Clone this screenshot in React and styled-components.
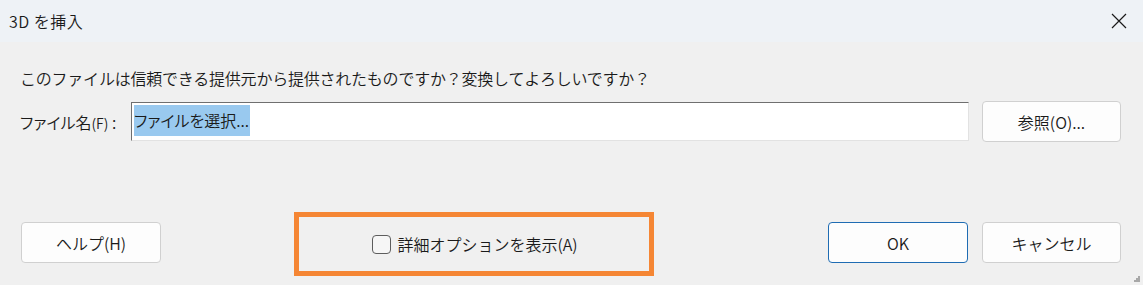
import styled, { createGlobalStyle } from "styled-components"

const GlobalStyle = createGlobalStyle`
    html, body {
        margin: 0;
        padding: 0;
        background: #f0f0f0;
    }
    body {
        font-family: "Noto Sans CJK JP", "Noto Sans", sans-serif;
        font-weight: 350;
        color: #1a1a1a;
    }
`

const Window = styled.div`
    position: relative;
    width: 1143px;
    height: 285px;
    display: flex;
    flex-direction: column;
    background: #f0f0f0;
    overflow: hidden;
`

const TitleBar = styled.div`
    height: 42px;
    flex-shrink: 0;
    display: flex;
    align-items: center;
    justify-content: space-between;
    padding: 0 15px 0 9px;
    background: #eef2f6;
    font-size: 16px;
    letter-spacing: 0.5px;
`

const CloseButton = styled.div`
    width: 18px;
    height: 18px;
    display: flex;
    align-items: center;
    justify-content: center;
`

const Body = styled.div`
    flex: 1;
    display: flex;
    flex-direction: column;
    padding: 0 22px 9px 20px;
`

const Message = styled.div`
    margin-top: 25px;
    font-size: 16px;
    line-height: 22px;
    letter-spacing: -0.22px;
`

const FileRow = styled.div`
    margin-top: 12px;
    display: flex;
    align-items: center;
`

const Label = styled.span`
    width: 111px;
    flex-shrink: 0;
    font-size: 16px;
    font-feature-settings: "palt";
    small {
        font-size: 14px;
    }
`

const Input = styled.div`
    flex: 1;
    height: 39px;
    box-sizing: border-box;
    background: #fff;
    border-top: 1px solid #6f6f6f;
    border-left: 1px solid #6f6f6f;
    border-right: 1px solid #e2e2e2;
    border-bottom: 1px solid #e2e2e2;
    padding: 2px 0 0 2px;
    display: flex;
    align-items: flex-start;
`

const Selected = styled.span`
    background: #99c9ef;
    font-size: 16px;
    line-height: 31px;
    padding-right: 1px;
    font-feature-settings: "palt";
`

const Button = styled.button`
    width: ${({ w }) => w || 140}px;
    height: 41px;
    flex-shrink: 0;
    box-sizing: border-box;
    background: #fdfdfd;
    border: 1px solid ${({ primary }) => primary ? "#1f6cb3" : "#d0d0d0"};
    border-radius: 4px;
    font-family: inherit;
    font-weight: inherit;
    font-size: 16px;
    color: #1a1a1a;
    padding: 0;
    margin-left: ${({ ml }) => ml || 0}px;
`

const Footer = styled.div`
    margin-top: auto;
    display: flex;
    align-items: flex-start;
    height: 64px;
    padding-left: 1px;
    & > ${Button} {
        margin-top: 10px;
    }
`

const Highlight = styled.div`
    width: 360px;
    height: 64px;
    box-sizing: border-box;
    margin-left: 133px;
    border: 5px solid #f58634;
    display: flex;
    align-items: center;
    justify-content: center;
    padding-left: 2px;
`

const Checkbox = styled.span`
    width: 19px;
    height: 19px;
    box-sizing: border-box;
    border: 1px solid #5d5d5d;
    border-radius: 4px;
    background: #f6f6f6;
    margin-right: 6px;
`

const CheckLabel = styled.span`
    font-size: 16px;
`

const Spacer = styled.div`
    flex: 1;
`

const Grip = styled.svg`
    position: absolute;
    right: 2px;
    bottom: 2px;
`

const App = () => {
    return (
        <Window>
            <GlobalStyle />
            <TitleBar>
                <span>3D を挿入</span>
                <CloseButton>
                    <svg width="16" height="16" viewBox="0 0 16 16">
                        <path d="M1 1 L15 15 M15 1 L1 15" stroke="#1a1a1a" strokeWidth="1.2" />
                    </svg>
                </CloseButton>
            </TitleBar>
            <Body>
                <Message>このファイルは信頼できる提供元から提供されたものですか？変換してよろしいですか？</Message>
                <FileRow>
                    <Label>ファイル名<small>(F)</small> :</Label>
                    <Input>
                        <Selected>ファイルを選択...</Selected>
                    </Input>
                    <Button w={139} ml={13}>参照(O)...</Button>
                </FileRow>
                <Footer>
                    <Button>ヘルプ(H)</Button>
                    <Highlight>
                        <Checkbox />
                        <CheckLabel>詳細オプションを表示(A)</CheckLabel>
                    </Highlight>
                    <Spacer />
                    <Button primary>OK</Button>
                    <Button w={139} ml={14}>キャンセル</Button>
                </Footer>
            </Body>
            <Grip width="8" height="8" viewBox="0 0 8 8">
                <rect x="5" y="1" width="2" height="2" fill="#a8a8a8" />
                <rect x="3" y="3" width="2" height="2" fill="#a8a8a8" />
                <rect x="5" y="3" width="2" height="2" fill="#a8a8a8" />
                <rect x="1" y="5" width="2" height="2" fill="#a8a8a8" />
                <rect x="3" y="5" width="2" height="2" fill="#a8a8a8" />
                <rect x="5" y="5" width="2" height="2" fill="#a8a8a8" />
            </Grip>
        </Window>
    )
}

export default App
